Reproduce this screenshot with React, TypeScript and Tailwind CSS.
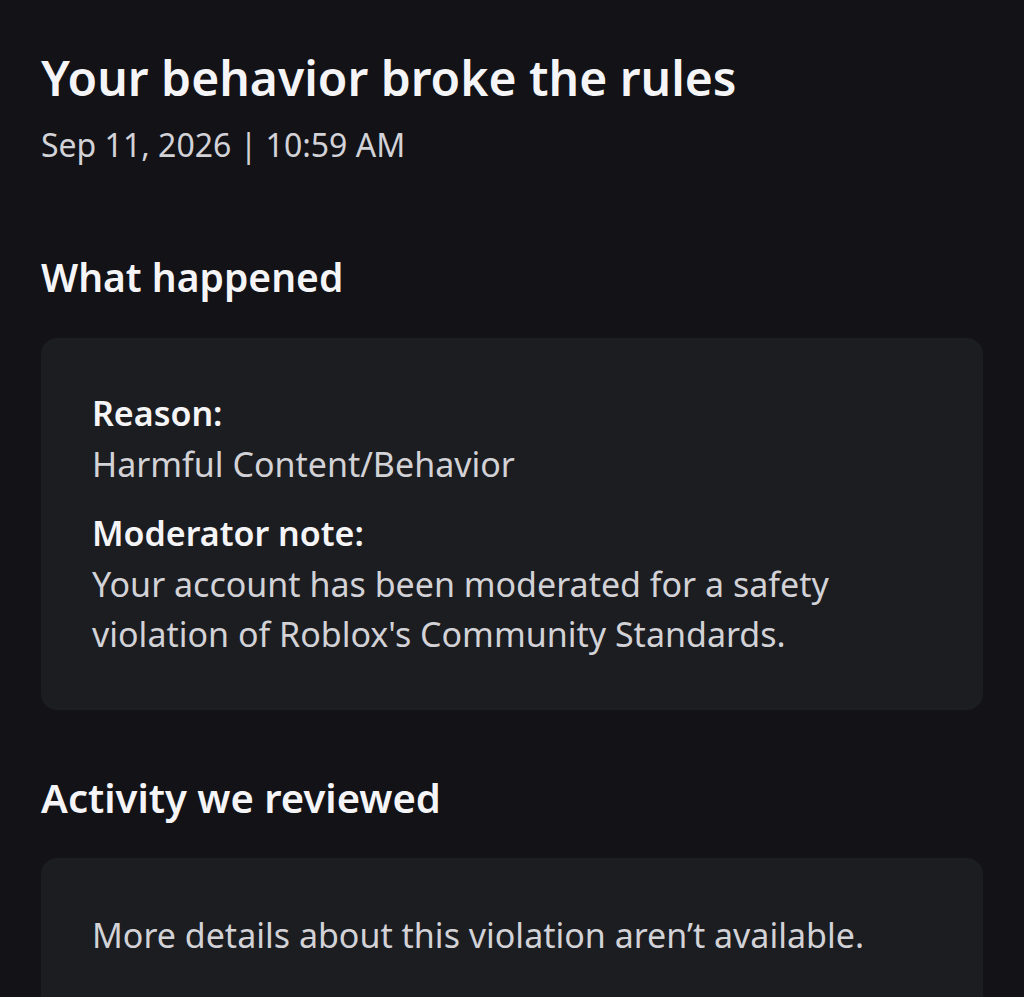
import React from 'react';

const font = { fontFamily: '"Noto Sans", "Open Sans", sans-serif' };

type Field = { label: string; value: string };

const fields: Field[] = [
  { label: 'Reason:', value: 'Harmful Content/Behavior' },
  {
    label: 'Moderator note:',
    value: "Your account has been moderated for a safety violation of Roblox's Community Standards.",
  },
];

export default function App() {
  return (
    <div className="min-h-[997px] w-[1024px] bg-[#121217] px-[41px] pt-[49px] text-white overflow-hidden" style={font}>
      {/* HEADER */}
      <h1 className="text-[48px] leading-[58px] font-semibold text-[#f5f5f7]">
        Your behavior broke the rules
      </h1>
      <p className="mt-[18px] text-[32px] leading-[40px] text-[#d2d2d7]">Sep 11, 2026 | 10:59 AM</p>

      {/* WHAT HAPPENED */}
      <h2 className="mt-[88px] text-[39px] leading-[48px] font-semibold text-[#f5f5f7]">What happened</h2>
      <div className="mt-[37px] w-[942px] rounded-[16px] bg-[#1c1d21] px-[51px] pt-[54px] pb-[51px]">
        {fields.map((f, i) => (
          <div key={f.label} className={i > 0 ? 'mt-[23px]' : ''}>
            <div className="text-[34px] leading-[42px] font-semibold text-[#f5f5f7]">{f.label}</div>
            <div className="mt-[5px] max-w-[820px] text-[34px] leading-[50px] text-[#d2d2d7]">{f.value}</div>
          </div>
        ))}
      </div>

      {/* ACTIVITY */}
      <h2 className="mt-[64px] text-[40px] leading-[48px] font-semibold text-[#f5f5f7]">Activity we reviewed</h2>
      <div className="mt-[36px] w-[942px] rounded-[16px] bg-[#1c1d21] px-[51px] pt-[56px] pb-[60px]">
        <p className="text-[34px] leading-[42px] text-[#d2d2d7]">More details about this violation aren’t available.</p>
      </div>
    </div>
  );
}
